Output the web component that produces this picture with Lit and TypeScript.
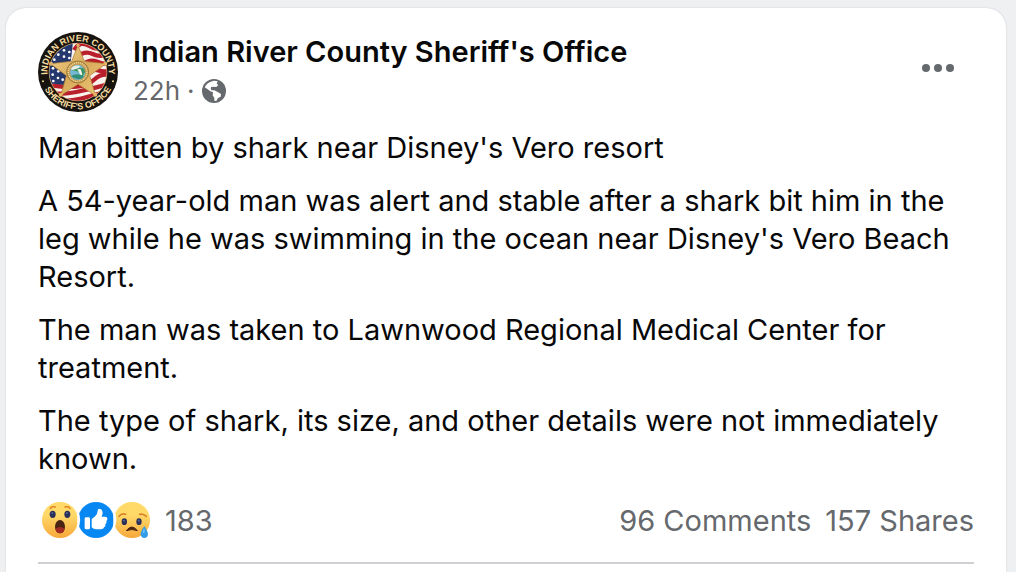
import { LitElement, html, css } from "lit";
import { customElement } from "lit/decorators.js";

@customElement("sheriff-seal")
class SheriffSeal extends LitElement {
  static styles = css`
    :host { display: block; width: 80px; height: 80px; flex: none; }
    svg { display: block; width: 100%; height: 100%; }
    .ring { font: 700 27px "Liberation Sans", Arial, sans-serif; fill: #f5dda0; }
  `;
  render() {
    return html`<svg viewBox="30 30 240 240" role="img" aria-label="Indian River County Sheriff's Office seal">
      <defs>
        <clipPath id="inner"><circle cx="150" cy="150" r="86" /></clipPath>
        <linearGradient id="gold" x1="0" y1="0" x2="1" y2="1">
          <stop offset="0" stop-color="#f3d690" /><stop offset=".5" stop-color="#d9ab5c" /><stop offset="1" stop-color="#efc878" />
        </linearGradient>
        <path id="topArc" d="M61.6 175A92 92 0 1 1 238.4 175" />
        <path id="bottomArc" d="M38 150A112 112 0 0 0 262 150" />
      </defs>
      <circle cx="150" cy="150" r="120" fill="#17130f" />
      <circle cx="150" cy="150" r="88" fill="#c9a25d" />
      <g clip-path="url(#inner)">
        <rect x="60" y="60" width="180" height="180" fill="#f8f1ec" />
        <g fill="none" stroke="#b9202b" stroke-width="13">
          <path d="M138 84Q156 54 184 72T236 70" />
          <path d="M145 106Q170 84 194 96T244 94" />
          <path d="M160 130Q188 108 210 120T250 116" />
          <path d="M160 158Q190 138 214 146T250 138" />
          <path d="M70 190Q110 196 145 194T200 172T250 160" />
          <path d="M70 214Q110 218 145 210T205 196T250 184" />
          <path d="M90 236Q130 238 160 230T225 212" />
        </g>
        <path d="M58 60H135L128 120L118 190L62 184Z" fill="#25386e" />
        <g fill="#fff">
          <circle cx="108" cy="85" r="4" /><circle cx="124" cy="90" r="4" /><circle cx="91" cy="98" r="4" />
          <circle cx="108" cy="104" r="4" /><circle cx="124" cy="108" r="4" /><circle cx="79" cy="113" r="4" />
          <circle cx="75" cy="139" r="4" /><circle cx="91" cy="148" r="4" /><circle cx="74" cy="158" r="4" />
          <circle cx="90" cy="168" r="4" /><circle cx="76" cy="177" r="4" /><circle cx="104" cy="173" r="4" />
        </g>
      </g>
      <path d="M150 70L169 118L234 125L185 161L203 221L150 187L98 221L115 161L67 125L131 118Z"
        fill="url(#gold)" stroke="#a8742f" stroke-width="2" stroke-linejoin="round" />
      <g fill="#e3b566"><circle cx="150" cy="70" r="5" /><circle cx="232" cy="125" r="6" /><circle cx="202" cy="218" r="6" /><circle cx="98" cy="218" r="6" /><circle cx="69" cy="125" r="6" /></g>
      <circle cx="149" cy="150" r="33" fill="#c49a4e" stroke="#85642d" stroke-width="2" />
      <circle cx="149" cy="150" r="28" fill="none" stroke="#f3e1a8" stroke-width="4" stroke-dasharray="3 3" />
      <circle cx="149" cy="151" r="23" fill="#73b7d1" />
      <path d="M128 141Q137 127 157 132L149 141L137 145Z" fill="#e6eee5" />
      <path d="M132 145L153 138L168 139L171 150L163 164L158 154L147 148Z" fill="#3e9360" />
      <path d="M148 141L158 142L163 157L158 162L153 151Z" fill="#f3f7ef" />
      <path d="M129 162Q150 151 168 164Q150 180 129 162" fill="#358e78" />
      <text class="ring" text-anchor="middle"><textPath href="#topArc" startOffset="50%">INDIAN RIVER COUNTY</textPath></text>
      <text class="ring" text-anchor="middle"><textPath href="#bottomArc" startOffset="50%">SHERIFF'S OFFICE</textPath></text>
      <g fill="#efd594"><circle cx="45" cy="178" r="3" /><circle cx="255" cy="178" r="3" /></g>
    </svg>`;
  }
}

@customElement("app-root")
class AppRoot extends LitElement {
  static styles = css`
    :host {
      display: block; min-height: 100vh; box-sizing: border-box;
      padding: 8px 10px 0 6px; background: #eff0f2; overflow: hidden;
      font-family: Inter, "Liberation Sans", sans-serif; color: #080809;
    }
    * { box-sizing: border-box; }
    .card {
      min-height: calc(100vh - 8px); padding: 24px 32px 0; background: #fff;
      border-radius: 20px 20px 0 0; box-shadow: 0 0 2px #c8cacd;
    }
    header { display: flex; gap: 15px; }
    .who { flex: 1; min-width: 0; }
    h1 { margin: 0; font-size: 29px; line-height: 40px; font-weight: 600; }
    a { color: inherit; text-decoration: none; }
    .meta { display: flex; align-items: center; gap: 7px; height: 37px; font-size: 26px; color: #65686c; }
    .meta svg { width: 24px; height: 24px; }
    button { padding: 0; border: 0; background: none; font: inherit; color: inherit; cursor: pointer; }
    .more { width: 72px; height: 72px; }
    .more svg { display: block; width: 40px; height: 40px; margin: auto; }
    .body { display: grid; gap: 15px; padding-top: 17px; font-size: 29px; line-height: 38px; }
    p { margin: 0; }
    footer {
      display: flex; align-items: center; justify-content: space-between;
      height: 86px; border-bottom: 2px solid #ced0d4; font-size: 29px; color: #65686c;
    }
    .reactions { display: flex; align-items: center; gap: 13px; padding-left: 4px; }
    .faces { display: flex; gap: 1px; }
    .faces svg { display: block; width: 36px; height: 36px; overflow: visible; }
    .counts { display: flex; gap: 14px; }
  `;
  render() {
    return html`<article class="card">
      <header>
        <sheriff-seal></sheriff-seal>
        <div class="who">
          <h1><a href="#">Indian River County Sheriff's Office</a></h1>
          <div class="meta"><a href="#">22h</a><span>·</span>
            <svg viewBox="0 0 72 72" role="img" aria-label="Public">
              <circle cx="36" cy="36" r="36" fill="#65686c" />
              <path fill="#fff" d="M8 25Q15 9 36 5L47 7L44 14L49 18L44 23L36 24L31 28L26 27L28 34L37 34L47 39L57 45L56 53L48 57L43 66L37 65L37 57L32 49L33 40L25 37L16 30Z" />
              <path fill="#65686c" d="M27 24L35 23L39 27L45 28L41 31L33 28L27 30Z" />
            </svg>
          </div>
        </div>
        <button class="more" aria-label="More options"><svg viewBox="0 0 40 40" fill="#65686c"><circle cx="8" cy="20" r="4" /><circle cx="20" cy="20" r="4" /><circle cx="32" cy="20" r="4" /></svg></button>
      </header>
      <div class="body">
        <p>Man bitten by shark near Disney's Vero resort</p>
        <p>A 54-year-old man was alert and stable after a shark bit him in the leg while he was swimming in the ocean near Disney's Vero Beach Resort.</p>
        <p>The man was taken to Lawnwood Regional Medical Center for treatment.</p>
        <p>The type of shark, its size, and other details were not immediately known.</p>
      </div>
      <footer>
        <button class="reactions" aria-label="183 reactions">
          <span class="faces">
            <svg viewBox="0 0 108 108">
              <defs><linearGradient id="face" x1="0" y1="0" x2="0" y2="1"><stop offset=".35" stop-color="#ffda69" /><stop offset="1" stop-color="#f7a83a" /></linearGradient></defs>
              <circle cx="54" cy="54" r="54" fill="url(#face)" />
              <path d="M25 19Q31 12 40 15M69 15Q78 12 84 19" fill="none" stroke="#e28a2d" stroke-width="5" stroke-linecap="round" />
              <ellipse cx="32" cy="37" rx="9" ry="11" fill="#2b2e59" /><ellipse cx="76" cy="37" rx="9" ry="11" fill="#2b2e59" />
              <circle cx="31" cy="33" r="3" fill="#536492" /><circle cx="75" cy="33" r="3" fill="#536492" />
              <ellipse cx="54" cy="74" rx="15" ry="20" fill="#4b2413" /><path d="M40 81Q54 69 68 81Q65 94 54 94T40 81" fill="#a22c24" />
            </svg>
            <svg viewBox="0 0 108 108">
              <circle cx="51" cy="54" r="54" fill="#0787f2" />
              <path d="M-5 22Q12 54 -5 86Z" fill="#fff" />
              <rect x="17" y="46" width="16" height="36" rx="4" fill="#fff" />
              <path d="M38 51L47 44Q56 37 56 26Q56 20 61 20Q71 21 71 34L68 44H78Q86 44 85 52Q84 55 82 57Q85 63 79 67Q81 74 75 76Q74 82 66 82H50Q41 80 38 76Z" fill="#fff" />
            </svg>
            <svg viewBox="0 0 108 108">
              <circle cx="48" cy="54" r="54" fill="url(#face)" />
              <path d="M-8 22Q10 54 -8 86Z" fill="#fff" />
              <path d="M9 43Q17 33 29 37M71 37Q82 34 91 43" fill="none" stroke="#d98329" stroke-width="5" stroke-linecap="round" />
              <ellipse cx="25" cy="59" rx="8" ry="10" fill="#2b2e59" /><ellipse cx="69" cy="59" rx="8" ry="10" fill="#2b2e59" />
              <circle cx="24" cy="56" r="3" fill="#536492" /><circle cx="68" cy="56" r="3" fill="#536492" />
              <path d="M31 86Q48 64 64 86Q48 79 31 86" fill="#4b2413" stroke="#4b2413" stroke-width="3" stroke-linejoin="round" />
              <path d="M85 72Q74 88 74 97Q75 108 85 108T96 97Q95 87 85 72" fill="#329ce9" /><path d="M85 79Q79 88 80 94L86 91Z" fill="#76c8f4" />
            </svg>
          </span>
          <span>183</span>
        </button>
        <div class="counts"><button>96 Comments</button><button>157 Shares</button></div>
      </footer>
    </article>`;
  }
}
